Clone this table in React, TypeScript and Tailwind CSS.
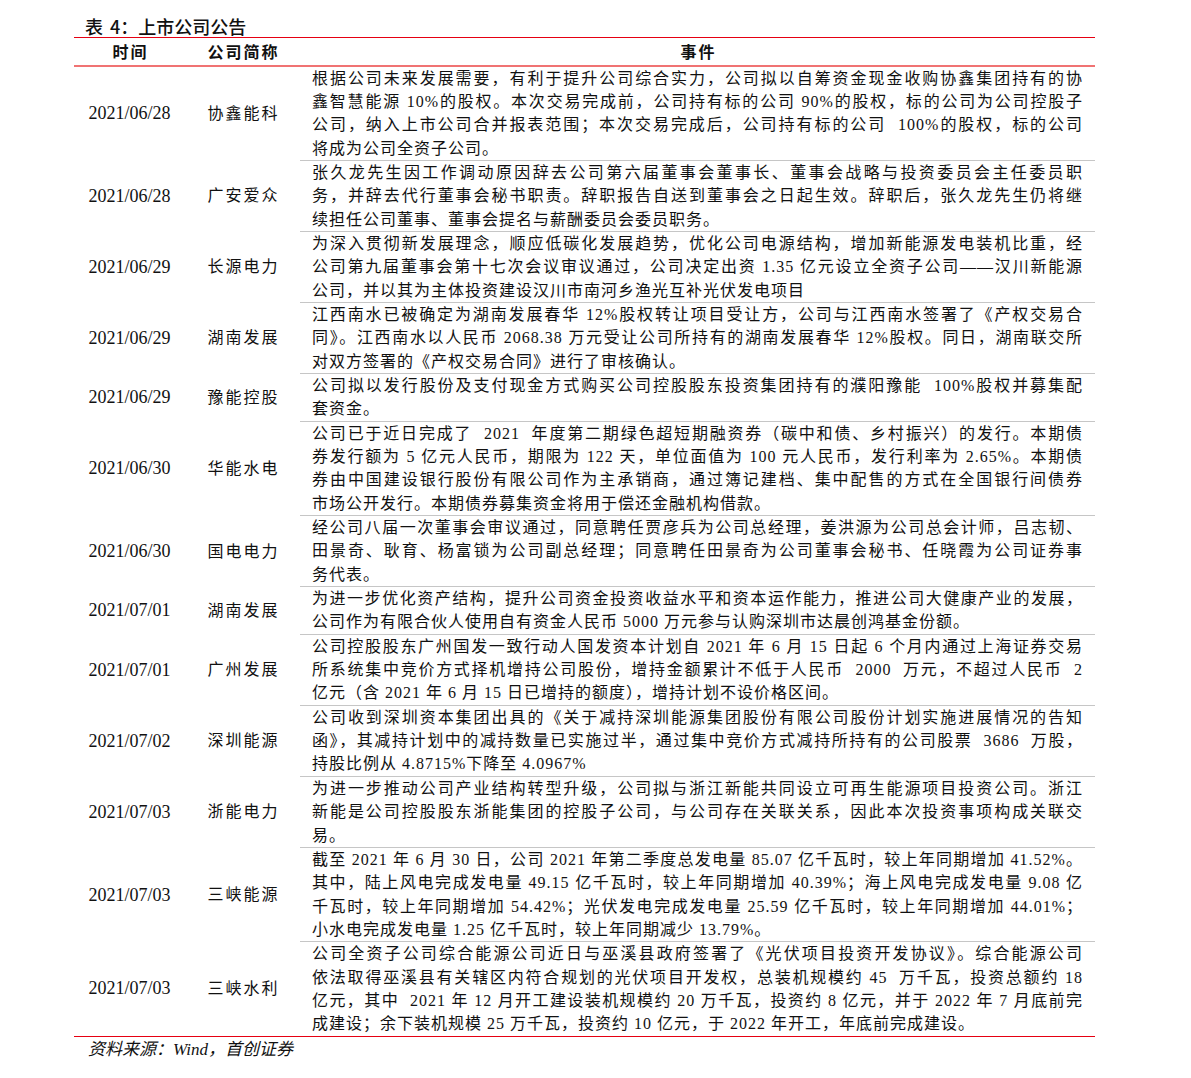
import { clsx } from "clsx";

type Announcement = {
  date: string;
  company: string;
  lines: string[];
};

// one entry per table row; event text is kept line by line so the breaks match the source
const rows: Announcement[] = [
  {
    date: "2021/06/28",
    company: "协鑫能科",
    lines: [
      "根据公司未来发展需要，有利于提升公司综合实力，公司拟以自筹资金现金收购协鑫集团持有的协",
      "鑫智慧能源 10%的股权。本次交易完成前，公司持有标的公司 90%的股权，标的公司为公司控股子",
      "公司，纳入上市公司合并报表范围；本次交易完成后，公司持有标的公司  100%的股权，标的公司",
      "将成为公司全资子公司。",
    ],
  },
  {
    date: "2021/06/28",
    company: "广安爱众",
    lines: [
      "张久龙先生因工作调动原因辞去公司第六届董事会董事长、董事会战略与投资委员会主任委员职",
      "务，并辞去代行董事会秘书职责。辞职报告自送到董事会之日起生效。辞职后，张久龙先生仍将继",
      "续担任公司董事、董事会提名与薪酬委员会委员职务。",
    ],
  },
  {
    date: "2021/06/29",
    company: "长源电力",
    lines: [
      "为深入贯彻新发展理念，顺应低碳化发展趋势，优化公司电源结构，增加新能源发电装机比重，经",
      "公司第九届董事会第十七次会议审议通过，公司决定出资 1.35 亿元设立全资子公司——汉川新能源",
      "公司，并以其为主体投资建设汉川市南河乡渔光互补光伏发电项目",
    ],
  },
  {
    date: "2021/06/29",
    company: "湖南发展",
    lines: [
      "江西南水已被确定为湖南发展春华 12%股权转让项目受让方，公司与江西南水签署了《产权交易合",
      "同》。江西南水以人民币 2068.38 万元受让公司所持有的湖南发展春华 12%股权。同日，湖南联交所",
      "对双方签署的《产权交易合同》进行了审核确认。",
    ],
  },
  {
    date: "2021/06/29",
    company: "豫能控股",
    lines: [
      "公司拟以发行股份及支付现金方式购买公司控股股东投资集团持有的濮阳豫能  100%股权并募集配",
      "套资金。",
    ],
  },
  {
    date: "2021/06/30",
    company: "华能水电",
    lines: [
      "公司已于近日完成了  2021  年度第二期绿色超短期融资券（碳中和债、乡村振兴）的发行。本期债",
      "券发行额为 5 亿元人民币，期限为 122 天，单位面值为 100 元人民币，发行利率为 2.65%。本期债",
      "券由中国建设银行股份有限公司作为主承销商，通过簿记建档、集中配售的方式在全国银行间债券",
      "市场公开发行。本期债券募集资金将用于偿还金融机构借款。",
    ],
  },
  {
    date: "2021/06/30",
    company: "国电电力",
    lines: [
      "经公司八届一次董事会审议通过，同意聘任贾彦兵为公司总经理，姜洪源为公司总会计师，吕志韧、",
      "田景奇、耿育、杨富锁为公司副总经理；同意聘任田景奇为公司董事会秘书、任晓霞为公司证券事",
      "务代表。",
    ],
  },
  {
    date: "2021/07/01",
    company: "湖南发展",
    lines: [
      "为进一步优化资产结构，提升公司资金投资收益水平和资本运作能力，推进公司大健康产业的发展，",
      "公司作为有限合伙人使用自有资金人民币 5000 万元参与认购深圳市达晨创鸿基金份额。",
    ],
  },
  {
    date: "2021/07/01",
    company: "广州发展",
    lines: [
      "公司控股股东广州国发一致行动人国发资本计划自 2021 年 6 月 15 日起 6 个月内通过上海证券交易",
      "所系统集中竞价方式择机增持公司股份，增持金额累计不低于人民币  2000  万元，不超过人民币  2",
      "亿元（含 2021 年 6 月 15 日已增持的额度），增持计划不设价格区间。",
    ],
  },
  {
    date: "2021/07/02",
    company: "深圳能源",
    lines: [
      "公司收到深圳资本集团出具的《关于减持深圳能源集团股份有限公司股份计划实施进展情况的告知",
      "函》，其减持计划中的减持数量已实施过半，通过集中竞价方式减持所持有的公司股票  3686  万股，",
      "持股比例从 4.8715%下降至 4.0967%",
    ],
  },
  {
    date: "2021/07/03",
    company: "浙能电力",
    lines: [
      "为进一步推动公司产业结构转型升级，公司拟与浙江新能共同设立可再生能源项目投资公司。浙江",
      "新能是公司控股股东浙能集团的控股子公司，与公司存在关联关系，因此本次投资事项构成关联交",
      "易。",
    ],
  },
  {
    date: "2021/07/03",
    company: "三峡能源",
    lines: [
      "截至 2021 年 6 月 30 日，公司 2021 年第二季度总发电量 85.07 亿千瓦时，较上年同期增加 41.52%。",
      "其中，陆上风电完成发电量 49.15 亿千瓦时，较上年同期增加 40.39%；海上风电完成发电量 9.08 亿",
      "千瓦时，较上年同期增加 54.42%；光伏发电完成发电量 25.59 亿千瓦时，较上年同期增加 44.01%；",
      "小水电完成发电量 1.25 亿千瓦时，较上年同期减少 13.79%。",
    ],
  },
  {
    date: "2021/07/03",
    company: "三峡水利",
    lines: [
      "公司全资子公司综合能源公司近日与巫溪县政府签署了《光伏项目投资开发协议》。综合能源公司",
      "依法取得巫溪县有关辖区内符合规划的光伏项目开发权，总装机规模约 45  万千瓦，投资总额约 18",
      "亿元，其中  2021 年 12 月开工建设装机规模约 20 万千瓦，投资约 8 亿元，并于 2022 年 7 月底前完",
      "成建设；余下装机规模 25 万千瓦，投资约 10 亿元，于 2022 年开工，年底前完成建设。",
    ],
  },
];

function EventLines({ lines }: { lines: string[] }) {
  return (
    <>
      {lines.map((line, i) => (
        <div
          key={i}
          className={clsx(
            "whitespace-pre",
            i < lines.length - 1 ? "text-justify [text-align-last:justify]" : "text-left",
          )}
        >
          {line}
        </div>
      ))}
    </>
  );
}

function TableRow({ row, last }: { row: Announcement; last: boolean }) {
  return (
    <div className="grid grid-cols-[111px_115px_1fr]">
      <div className="flex items-center justify-center text-[18px]">{row.date}</div>
      <div className="flex items-center justify-center pl-[2px] text-[16px] tracking-[2px]">
        {row.company}
      </div>
      {/* separators only run under the event column */}
      <div
        className={clsx(
          "px-3 text-[16px] leading-[23.35px] tracking-[1px]",
          !last && "border-b border-[#c6c6c6]",
        )}
      >
        <EventLines lines={row.lines} />
      </div>
    </div>
  );
}

export default function App() {
  return (
    <div className="h-[1078px] w-[1191px] bg-white text-[#111] font-['Liberation_Serif','Noto_Sans_CJK_SC',serif]">
      <div className="ml-[74px] w-[1021px]">
        <div className="h-[37px] pl-[11px] pt-[15px] text-[18px] leading-[22px] font-medium font-['Noto_Sans_CJK_SC',sans-serif]">
          表<span className="ml-[7px]">4：上市公司公告</span>
        </div>

        <div className="border-t-[1.5px] border-b-2 border-t-[#e60012] border-b-[#f07373]">
          <div className="grid h-[26.5px] grid-cols-[111px_115px_1fr] items-center text-[16px] font-bold tracking-[2px] font-['Noto_Sans_CJK_SC',sans-serif]">
            <div className="pl-[2px] text-center">时间</div>
            <div className="pl-[2px] text-center">公司简称</div>
            <div className="pl-[2px] text-center">事件</div>
          </div>
        </div>

        <div className="border-b-[1.5px] border-[#e60012]">
          {rows.map((row, i) => (
            <TableRow key={i} row={row} last={i === rows.length - 1} />
          ))}
        </div>

        <div className="pl-[14px] pt-[2px] text-[17px] leading-[22px] italic">
          资料来源：Wind，首创证券
        </div>
      </div>
    </div>
  );
}
